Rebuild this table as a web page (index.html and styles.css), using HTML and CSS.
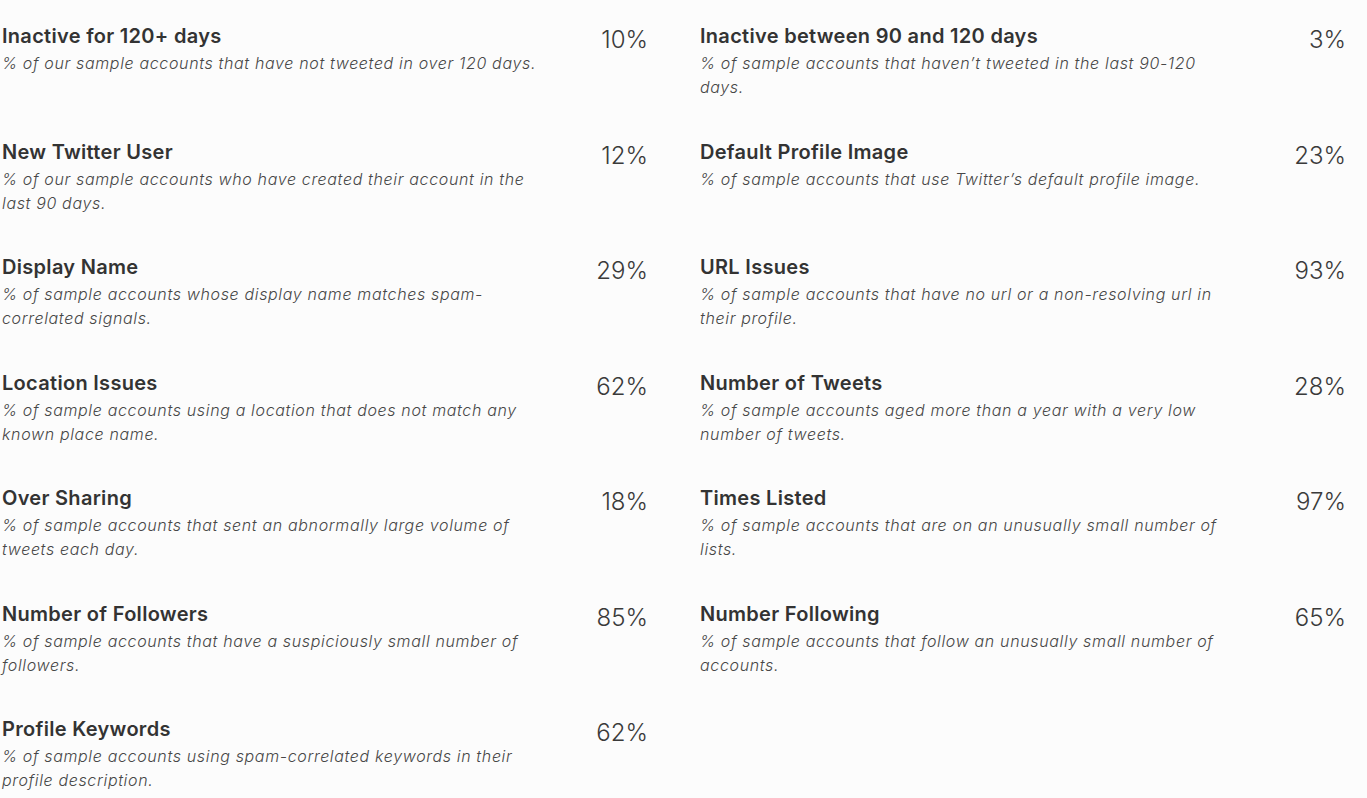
FILE: index.html
```html
<!DOCTYPE html>
<html lang="en">
<head>
<meta charset="utf-8">
<title>Sample account stats</title>
<link rel="stylesheet" href="styles.css">
</head>
<body>
<main class="stats">
  <div class="stat">
    <div class="stat-text">
      <h3 class="stat-title">Inactive for 120+ days</h3>
      <p class="stat-desc">% of our sample accounts that have not tweeted in over 120 days.</p>
    </div>
    <div class="stat-value">10%</div>
  </div>
  <div class="stat">
    <div class="stat-text">
      <h3 class="stat-title">Inactive between 90 and 120 days</h3>
      <p class="stat-desc">% of sample accounts that haven’t tweeted in the last 90-120 days.</p>
    </div>
    <div class="stat-value">3%</div>
  </div>
  <div class="stat">
    <div class="stat-text">
      <h3 class="stat-title">New Twitter User</h3>
      <p class="stat-desc">% of our sample accounts who have created their account in the last 90 days.</p>
    </div>
    <div class="stat-value">12%</div>
  </div>
  <div class="stat">
    <div class="stat-text">
      <h3 class="stat-title">Default Profile Image</h3>
      <p class="stat-desc">% of sample accounts that use Twitter’s default profile image.</p>
    </div>
    <div class="stat-value">23%</div>
  </div>
  <div class="stat">
    <div class="stat-text">
      <h3 class="stat-title">Display Name</h3>
      <p class="stat-desc">% of sample accounts whose display name matches spam-correlated signals.</p>
    </div>
    <div class="stat-value">29%</div>
  </div>
  <div class="stat">
    <div class="stat-text">
      <h3 class="stat-title">URL Issues</h3>
      <p class="stat-desc">% of sample accounts that have no url or a non-resolving url in their profile.</p>
    </div>
    <div class="stat-value">93%</div>
  </div>
  <div class="stat">
    <div class="stat-text">
      <h3 class="stat-title">Location Issues</h3>
      <p class="stat-desc">% of sample accounts using a location that does not match any known place name.</p>
    </div>
    <div class="stat-value">62%</div>
  </div>
  <div class="stat">
    <div class="stat-text">
      <h3 class="stat-title">Number of Tweets</h3>
      <p class="stat-desc">% of sample accounts aged more than a year with a very low number of tweets.</p>
    </div>
    <div class="stat-value">28%</div>
  </div>
  <div class="stat">
    <div class="stat-text">
      <h3 class="stat-title">Over Sharing</h3>
      <p class="stat-desc">% of sample accounts that sent an abnormally large volume of tweets each day.</p>
    </div>
    <div class="stat-value">18%</div>
  </div>
  <div class="stat">
    <div class="stat-text">
      <h3 class="stat-title">Times Listed</h3>
      <p class="stat-desc">% of sample accounts that are on an unusually small number of lists.</p>
    </div>
    <div class="stat-value">97%</div>
  </div>
  <div class="stat">
    <div class="stat-text">
      <h3 class="stat-title">Number of Followers</h3>
      <p class="stat-desc">% of sample accounts that have a suspiciously small number of followers.</p>
    </div>
    <div class="stat-value">85%</div>
  </div>
  <div class="stat">
    <div class="stat-text">
      <h3 class="stat-title">Number Following</h3>
      <p class="stat-desc">% of sample accounts that follow an unusually small number of accounts.</p>
    </div>
    <div class="stat-value">65%</div>
  </div>
  <div class="stat">
    <div class="stat-text">
      <h3 class="stat-title">Profile Keywords</h3>
      <p class="stat-desc">% of sample accounts using spam-correlated keywords in their profile description.</p>
    </div>
    <div class="stat-value">62%</div>
  </div>
</main>
</body>
</html>
```

FILE: styles.css
```css
html, body {
  margin: 0;
  padding: 0;
  background: #fcfcfc;
}

body {
  font-family: "Inter", "Open Sans", sans-serif;
  color: #3a3a3a;
}

.stats {
  display: grid;
  grid-template-columns: 646px 646px;
  column-gap: 52px;
  grid-auto-rows: 115.5px;
  padding: 22px 0 0 2px;
}

.stat {
  display: flex;
  align-items: flex-start;
}

.stat-text {
  width: 538px;
}

.stat-title {
  margin: 0;
  font-size: 20px;
  line-height: 28px;
  font-weight: 600;
  letter-spacing: 0.3px;
  color: #333;
}

.stat-desc {
  margin: 0;
  padding-top: 1px;
  font-size: 16px;
  line-height: 24px;
  font-style: italic;
  font-weight: 300;
  letter-spacing: 0.65px;
  color: #474747;
}

.stat-value {
  margin-left: auto;
  padding-top: 1px;
  font-size: 24px;
  line-height: 34px;
  font-weight: 300;
  color: #3a3a3a;
}
```
